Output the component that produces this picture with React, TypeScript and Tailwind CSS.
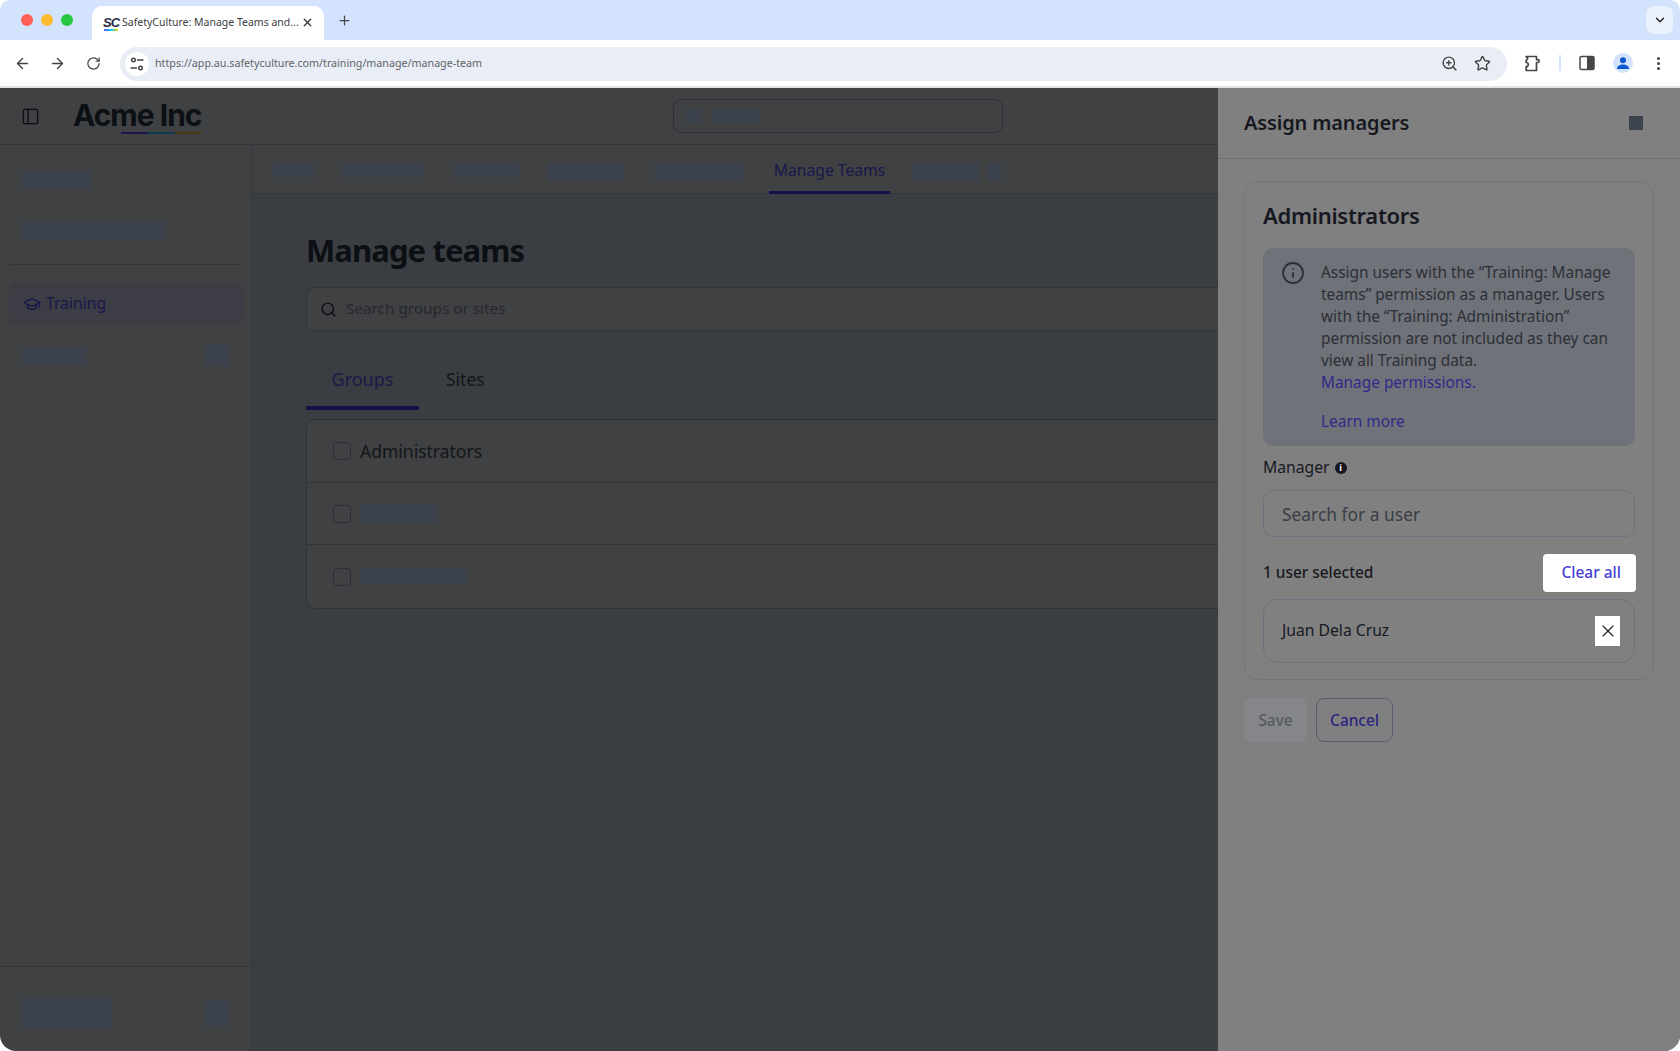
import { ArrowLeft, ArrowRight, ChevronDown, EllipsisVertical, GraduationCap, Info, PanelLeft, Plus, RotateCw, Search, Star, X, ZoomIn } from 'lucide-react';

// 遮罩下的模糊占位块
function Blur({ className }: { className: string }) {
  return <div className={`bg-[#3c434e] shrink-0 ${className}`} />;
}

function TuneIcon() {
  return (
    <svg width="16" height="16" viewBox="0 0 16 16" fill="none" stroke="#3c4043" strokeWidth="1.4">
      <circle cx="4.5" cy="4" r="1.8" />
      <path d="M8 4h6.5" />
      <circle cx="11.5" cy="12" r="1.8" />
      <path d="M1.5 12H8" />
    </svg>
  );
}

function PuzzleIcon() {
  return (
    <svg width="20" height="20" viewBox="0 0 20 20" fill="none" stroke="#444746" strokeWidth="1.7" strokeLinejoin="round">
      <path d="M3 3.5h10.5v3.2h1.2a1.4 1.4 0 0 1 0 2.8h-1.2v8H3.2v-3.8a2 2 0 0 0 0-4.2V7.200a2 2 0 0 0 1.500-1.900z" />
    </svg>
  );
}

function SidePanelIcon() {
  return (
    <svg width="16" height="16" viewBox="0 0 16 16">
      <rect x="1" y="1.500" width="14" height="13" rx="1.500" fill="none" stroke="#444746" strokeWidth="1.500" />
      <path d="M8 1.500h5.500A1.500 1.500 0 0 1 15 3v10a1.500 1.500 0 0 1-1.500 1.500H8z" fill="#444746" />
    </svg>
  );
}

function BrowserChrome() {
  return (
    <div className="shrink-0">
      {/* 标签栏 */}
      <div className="h-[40px] bg-[#d3e3fd] flex items-end pl-[21px] pr-[7px] relative">
        <div className="flex items-center gap-2 self-center">
          <span className="w-3 h-3 rounded-full bg-[#ff5f57]" />
          <span className="w-3 h-3 rounded-full bg-[#febc2e]" />
          <span className="w-3 h-3 rounded-full bg-[#28c840]" />
        </div>
        <div className="ml-[19px] w-[232px] h-[34px] bg-white rounded-t-[10px] flex items-center pl-[11px]">
          <div className="w-[16px] flex flex-col items-center mr-[3px]">
            <span className="text-[13px] leading-[13px] font-black italic tracking-[-1px] text-[#1f2a44] [font-family:'Liberation_Sans',sans-serif]">SC</span>
            <span className="w-[14px] h-[2px] bg-[linear-gradient(90deg,#6559ff,#00d1ff,#ffd700)]" />
          </div>
          <span className="text-[10.5px] text-[#3c4043] whitespace-nowrap w-[178px]">SafetyCulture: Manage Teams and...</span>
          <X size={13} strokeWidth={2.6} className="text-[#3c4043] ml-px -mt-[2px]" />
        </div>
        <Plus size={15} strokeWidth={2} className="text-[#444746] ml-[13px] self-center" />
        <div className="ml-auto self-start mt-[6px] w-[27px] h-[28px] rounded-[8px] bg-[#eaf1fd] flex items-center justify-center">
          <ChevronDown size={14} strokeWidth={2.4} className="text-[#1f1f1f]" />
        </div>
      </div>
      {/* 地址栏 */}
      <div className="h-[46px] bg-white rounded-t-[8px] flex items-center pl-[14px] relative">
        <ArrowLeft size={17} strokeWidth={2} className="text-[#444746] shrink-0" />
        <ArrowRight size={17} strokeWidth={2} className="text-[#444746] ml-[18px] shrink-0" />
        <RotateCw size={15} strokeWidth={2} className="text-[#444746] ml-[20px] shrink-0" />
        <div className="ml-[19px] w-[1387px] shrink-0 h-[34px] mt-[1px] rounded-full bg-[#e9eef6] flex items-center pl-[5px]">
          <div className="w-[24px] h-[24px] rounded-full bg-white flex items-center justify-center">
            <TuneIcon />
          </div>
          <span className="ml-[6px] text-[10.7px] text-[#5f6368]">https://app.au.safetyculture.com/training/manage/manage-team</span>
          <ZoomIn size={17} strokeWidth={2} className="text-[#444746] ml-auto" />
          <Star size={17} strokeWidth={2} className="text-[#444746] ml-[16px] mr-[16px]" />
        </div>
        <div className="ml-[16px] shrink-0"><PuzzleIcon /></div>
        <div className="ml-[16px] w-[2px] h-[16px] bg-[#d3e3fd] shrink-0" />
        <div className="ml-[18px] shrink-0"><SidePanelIcon /></div>
        <div className="ml-[18px] w-[20px] h-[20px] shrink-0 rounded-full bg-[#d3e3fd] flex items-center justify-center overflow-hidden">
          <svg width="14" height="14" viewBox="0 0 14 14" fill="#0b57d0">
            <circle cx="7" cy="4.200" r="3" />
            <path d="M1 13c0-3 2.600-4.500 6-4.500s6 1.500 6 4.500z" />
          </svg>
        </div>
        <EllipsisVertical size={17} strokeWidth={2.4} className="text-[#444746] ml-[17px] shrink-0" />
      </div>
      <div className="h-[2px] bg-[#e3e3e3]" />
    </div>
  );
}

function Sidebar() {
  return (
    <div className="w-[252px] shrink-0 bg-[#404143] border-r border-[#37383c] flex flex-col">
      <Blur className="w-[69px] h-[17px] ml-[22px] mt-[26px]" />
      <Blur className="w-[144px] h-[17px] ml-[22px] mt-[34px]" />
      <div className="h-px bg-[#36373b] ml-[9px] mr-[8px] mt-[25px]" />
      <div className="ml-[9px] mr-[8px] mt-[17px] h-[44px] rounded-[10px] bg-[#3c3d45] flex items-center pl-[14px]">
        <GraduationCap size={18} strokeWidth={2} className="text-[#1a174c]" />
        <span className="ml-[5px] text-[15.7px] text-[#1a174c]">Training</span>
      </div>
      <div className="flex items-center justify-between pl-[22px] pr-[22px] mt-[19px]">
        <Blur className="w-[64px] h-[18px]" />
        <Blur className="w-[24px] h-[21px]" />
      </div>
      <div className="mt-auto h-[85px] pt-[8px] border-t border-[#36373b] flex items-center justify-between pl-[22px] pr-[22px]">
        <Blur className="w-[90px] h-[30px]" />
        <Blur className="w-[24px] h-[25px]" />
      </div>
    </div>
  );
}

function Row({ children, className }: { children: React.ReactNode; className: string }) {
  return (
    <div className={`flex items-center pl-[26px] ${className}`}>
      <span className="w-[18px] h-[18px] rounded-[4px] border border-[#2e2f34] shrink-0" />
      <div className="ml-[9px]">{children}</div>
    </div>
  );
}

function MainContent() {
  return (
    <div className="flex-1 min-w-0 bg-[#3a3d42] flex flex-col">
      {/* 顶部子导航 */}
      <div className="h-[49px] shrink-0 bg-[#404143] border-b border-[#34363a] flex items-start pl-[21px]">
        <Blur className="w-[41px] h-[13px] mt-[19px]" />
        <Blur className="w-[81px] h-[13px] mt-[19px] ml-[28px]" />
        <Blur className="w-[65px] h-[14px] mt-[18px] ml-[31px]" />
        <Blur className="w-[76px] h-[17px] mt-[19px] ml-[29px]" />
        <Blur className="w-[88px] h-[18px] mt-[18px] ml-[31px]" />
        <div className="ml-[26px] w-[121px] h-[49px] border-b-[3px] border-[#15114a] text-center text-[15.7px] leading-[50px] text-[#1a174c] whitespace-nowrap">Manage Teams</div>
        <Blur className="w-[67px] h-[17px] mt-[18px] ml-[22px]" />
        <Blur className="w-[13px] h-[17px] mt-[18px] ml-[9px]" />
      </div>
      <div className="pl-[54px] flex-1">
        <h1 className="mt-[32px] text-[31px] leading-[48px] tracking-[-0.9px] font-bold text-[#0c0f14]">Manage teams</h1>
        <div className="mt-[13px] h-[44px] rounded-[8px] border border-[#32343a] bg-[#404143] flex items-center pl-[13px]">
          <Search size={17} strokeWidth={2} className="text-[#0c0f14]" />
          <span className="ml-[9px] -mt-[2px] text-[15.3px] text-[#26282d]">Search groups or sites</span>
        </div>
        <div className="mt-[22px] flex h-[57px] items-start">
          <div className="w-[113px] h-[57px] border-b-4 border-[#15114a] text-center text-[18px] leading-[52px] text-[#1c1948]">Groups</div>
          <div className="ml-[27px] text-[17.5px] leading-[52px] text-[#14161b]">Sites</div>
        </div>
        <div className="mt-[9px] w-[1300px] rounded-[8px] border border-[#313337] bg-[#404143]">
          <Row className="h-[63px] border-b border-[#343539]"><span className="text-[17.5px] text-[#14161b]">Administrators</span></Row>
          <Row className="h-[62px] border-b border-[#343539]"><Blur className="w-[78px] h-[18px]" /></Row>
          <Row className="h-[63px]"><Blur className="w-[107px] h-[15px]" /></Row>
        </div>
      </div>
    </div>
  );
}

function AssignPanel() {
  return (
    <div className="absolute right-0 top-0 bottom-0 w-[462px] bg-[#808080] flex flex-col">
      <div className="h-[71px] shrink-0 border-b border-[#6f7076] flex items-center justify-between pl-[26px] pr-[37px]">
        <span className="text-[20px] font-semibold tracking-[-0.15px] text-[#16181f] -mt-[1px]">Assign managers</span>
        <div className="w-[14px] h-[14px] bg-[#3d4450] -mt-[1px]" />
      </div>
      <div className="ml-[26px] mr-[26px] mt-[22px] h-[499px] rounded-[14px] border border-[#75767c] px-[18px]">
        <h2 className="mt-[16px] text-[22px] leading-[35px] tracking-[-0.3px] font-semibold text-[#16181f]">Administrators</h2>
        <div className="mt-[15px] h-[198px] rounded-[10px] bg-[#6f7278] flex pl-[18px] pt-[13px]">
          <Info size={24} strokeWidth={1.8} className="text-[#2c2f36] shrink-0" />
          <div className="ml-[16px] text-[15.4px] leading-[22px] text-[#2c2f36] w-[302px] pt-[1px]">
            Assign users with the “Training: Manage teams” permission as a manager. Users with the “Training: Administration” permission are not included as they can view all Training data.
            <div className="text-[#2f2a8a]">Manage permissions.</div>
            <div className="text-[#2f2a8a] mt-[17px]">Learn more</div>
          </div>
        </div>
        <div className="mt-[11px] flex items-center h-[22px]">
          <span className="text-[15.7px] text-[#16181f]">Manager</span>
          <span className="ml-[5px] w-[12px] h-[12px] rounded-full bg-[#16181f] text-white text-[9px] leading-[12px] text-center font-bold">i</span>
        </div>
        <div className="mt-[11px] h-[47px] rounded-[10px] border border-[#6f7180] flex items-center pl-[18px] pt-[2px] text-[17.4px] text-[#3a3d45]">Search for a user</div>
        <div className="mt-[17px] flex items-center justify-between h-[38px]">
          <span className="text-[15.4px] font-medium text-[#16181f]">1 user selected</span>
          <button className="w-[93px] h-[38px] -mr-px rounded-[4px] bg-white text-[15.5px] font-medium text-[#4740d4] text-right pr-[15px] -mt-[1px]">Clear all</button>
        </div>
        <div className="mt-[7px] h-[64px] rounded-[14px] border border-[#6f7180] flex items-center justify-between pl-[18px] pr-[14px]">
          <span className="text-[15.7px] text-[#16181f]">Juan Dela Cruz</span>
          <div className="w-[25px] h-[30px] bg-white flex items-center justify-center">
            <X size={20} strokeWidth={1.4} className="text-[#1f2127]" />
          </div>
        </div>
      </div>
      <div className="ml-[26px] mt-[18px] flex gap-[9px]">
        <div className="w-[63px] h-[44px] pt-[1px] rounded-[8px] bg-[#85868a] flex items-center justify-center text-[15.4px] font-medium text-[#55585f]">Save</div>
        <div className="w-[77px] h-[44px] pt-[1px] rounded-[8px] border border-[#5b5d70] flex items-center justify-center text-[15.4px] font-medium text-[#2a2680]">Cancel</div>
      </div>
    </div>
  );
}

export default function App() {
  return (
    <div className="w-[1680px] h-[1051px] bg-white [font-family:'Noto_Sans',sans-serif]">
      <div className="w-full h-full rounded-t-[10px] rounded-b-[16px] overflow-hidden flex flex-col">
        <BrowserChrome />
        <div className="flex-1 min-h-0 flex flex-col relative">
          {/* 应用头部 */}
          <div className="h-[57px] shrink-0 bg-[#404143] border-b border-[#34363a] flex items-center pl-[21px]">
            <PanelLeft size={19} strokeWidth={1.8} className="text-[#0c0f14]" />
            <div className="ml-[33px] w-[130px] relative">
              <div className="-mt-[2px] text-[30px] leading-[36px] font-bold tracking-[-1px] text-[#0c0f14] [font-family:Inter,sans-serif] whitespace-nowrap">Acme Inc</div>
              <div className="absolute left-[48px] top-[33px] w-[81px] h-[2px] flex">
                <span className="flex-1 bg-[#1f1450]" />
                <span className="flex-1 bg-[#0b3a4d]" />
                <span className="flex-1 bg-[#463a0c]" />
              </div>
            </div>
            <div className="ml-[470px] w-[330px] h-[34px] rounded-[8px] border border-[#2e2f34] flex items-center pl-[12px] gap-[10px]">
              <Blur className="w-[16px] h-[14px]" />
              <Blur className="w-[48px] h-[14px]" />
            </div>
          </div>
          <div className="flex-1 min-h-0 flex">
            <Sidebar />
            <MainContent />
          </div>
          <AssignPanel />
        </div>
      </div>
    </div>
  );
}
